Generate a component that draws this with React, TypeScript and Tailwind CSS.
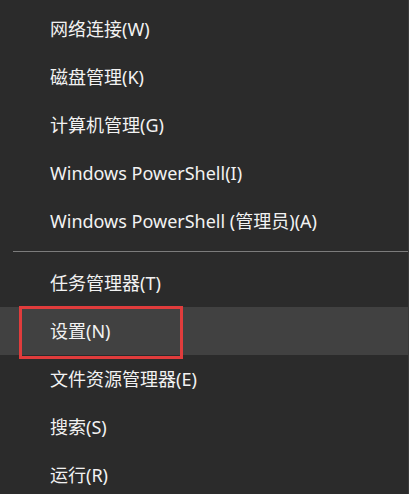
import React from "react";

interface MenuItem {
  label: string;
  active?: boolean;
}

const topItems: MenuItem[] = [
  { label: "网络连接(W)" },
  { label: "磁盘管理(K)" },
  { label: "计算机管理(G)" },
  { label: "Windows PowerShell(I)" },
  { label: "Windows PowerShell (管理员)(A)" },
];

const bottomItems: MenuItem[] = [
  { label: "任务管理器(T)" },
  { label: "设置(N)", active: true },
  { label: "文件资源管理器(E)" },
  { label: "搜索(S)" },
  { label: "运行(R)" },
];

function Row({ item }: { item: MenuItem }) {
  return (
    <div
      className={`relative h-[48px] flex items-center pl-[50px] text-[18px] text-[#f2f2f2] ${
        item.active ? "bg-[#414141]" : ""
      }`}
    >
      <span>{item.label}</span>
      {/* annotation box */}
      {item.active && (
        <div className="absolute left-[19px] top-[-1px] w-[164px] h-[53px] border-[3px] border-[#e03c3c]" />
      )}
    </div>
  );
}

export default function App() {
  return (
    <div
      className="w-[409px] h-[494px] bg-[#2b2b2b] overflow-hidden pt-[5px] border-r border-[#3a3a3a]"
      style={{ fontFamily: '"Noto Sans", "Noto Sans CJK SC", sans-serif' }}
    >
      {topItems.map(item => (
        <Row key={item.label} item={item} />
      ))}
      <div className="pt-[6px] pb-[7px] pl-[13px]">
        <div className="h-px bg-[#7c7c7c]" />
      </div>
      {bottomItems.map(item => (
        <Row key={item.label} item={item} />
      ))}
    </div>
  );
}
